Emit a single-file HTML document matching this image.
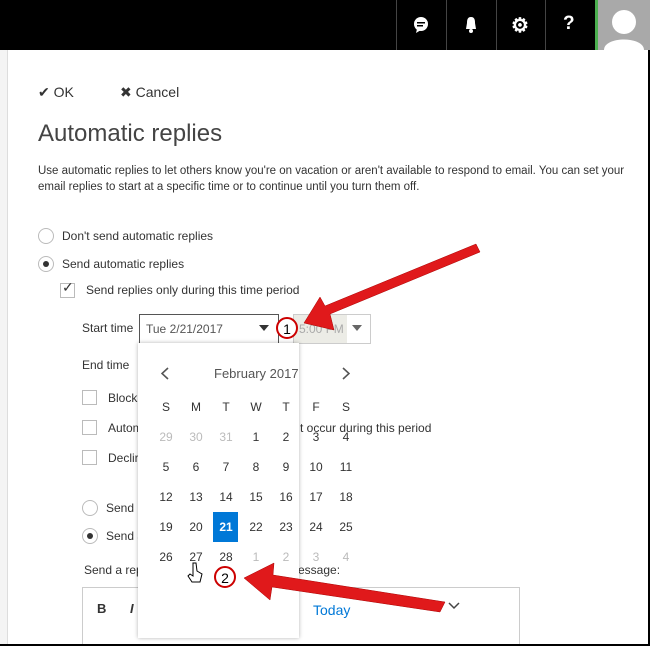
<!DOCTYPE html>
<html><head><style>
html,body{margin:0;width:650px;height:646px;overflow:hidden}
body{background:#fff;font-family:"Liberation Sans",sans-serif;position:relative;color:#333}
.a{position:absolute;white-space:nowrap}
.t{font-size:12px;color:#333}
.cb{position:absolute;width:13px;height:13px;border:1px solid #bbb;background:#fff}
.rd{position:absolute;width:14px;height:14px;border:1px solid #bbb;border-radius:50%;background:#fff}
.cal{position:absolute;left:138px;top:343px;width:161px;height:295px;background:#fff;box-shadow:0 0 4px rgba(0,0,0,.3)}
.g{position:absolute;font-size:12px;width:24px;text-align:center}
</style></head><body>
<div class="a" style="left:0;top:0;width:650px;height:50px;background:#000"></div>
<div class="a" style="left:396px;top:0;width:1px;height:50px;background:#444"></div>
<div class="a" style="left:446px;top:0;width:1px;height:50px;background:#444"></div>
<div class="a" style="left:496px;top:0;width:1px;height:50px;background:#444"></div>
<div class="a" style="left:545px;top:0;width:1px;height:50px;background:#444"></div>
<svg class="a" style="left:412px;top:16px" width="18" height="18"><circle cx="9" cy="8" r="7" fill="#fff"/><path d="M5 13 L4 17 L9 14Z" fill="#fff"/><rect x="5" y="6" width="8" height="1.5" fill="#000"/><rect x="5" y="9" width="6" height="1.5" fill="#000"/></svg>
<svg class="a" style="left:462px;top:15px" width="18" height="20"><path d="M9 2 C5 2 5 6 5 8 L4 14 H14 L13 8 C13 6 13 2 9 2Z" fill="#fff"/><circle cx="9" cy="16" r="2" fill="#fff"/></svg>
<div class="a" style="left:511px;top:13px;color:#fff;font-size:20px;font-weight:bold">⚙</div>
<div class="a" style="left:563px;top:13px;color:#fff;font-size:19px;font-weight:bold">?</div>
<div class="a" style="left:595px;top:0;width:3px;height:50px;background:#4caf50"></div>
<div class="a" style="left:598px;top:0;width:52px;height:50px;background:#a9a9a9"></div>
<svg class="a" style="left:598px;top:0" width="52" height="50"><circle cx="26" cy="22" r="12" fill="#fff"/><path d="M6 50 C6 36 46 36 46 50Z" fill="#fff"/></svg>
<div class="a" style="left:0;top:50px;width:7px;height:596px;background:#f4f4f4;border-right:1px solid #ddd"></div>
<div class="a" style="left:38px;top:84px;font-size:14px;color:#333">✔ OK</div>
<div class="a" style="left:120px;top:84px;font-size:14px;color:#333">✖ Cancel</div>
<div class="a" style="left:38px;top:120px;font-size:24px;font-weight:300;color:#444">Automatic replies</div>
<div class="a t" style="left:38px;top:165px;font-size:11.5px">Use automatic replies to let others know you're on vacation or aren't available to respond to email. You can set your</div>
<div class="a t" style="left:38px;top:181px;font-size:11.5px">email replies to start at a specific time or to continue until you turn them off.</div>
<div class="rd" style="left:38px;top:228px"></div><div class="a t" style="left:62px;top:229px">Don't send automatic replies</div>
<div class="rd" style="left:38px;top:256px"></div><div class="a" style="left:43px;top:261px;width:6px;height:6px;border-radius:50%;background:#333"></div><div class="a t" style="left:62px;top:257px">Send automatic replies</div>
<div class="cb" style="left:60px;top:283px"></div><div class="a" style="left:62px;top:279px;font-size:14px;color:#333">✓</div><div class="a t" style="left:86px;top:283px">Send replies only during this time period</div>
<div class="a t" style="left:82px;top:321px">Start time</div>
<div class="a" style="left:139px;top:314px;width:138px;height:28px;border:1px solid #555;background:#fff"></div>
<div class="a t" style="left:146px;top:322px;color:#555">Tue 2/21/2017</div>
<svg class="a" style="left:259px;top:325px" width="10" height="6"><path d="M0 0H10L5 6Z" fill="#333"/></svg>
<div class="a" style="left:293px;top:314px;width:76px;height:28px;border:1px solid #ccc;background:#fff"></div>
<div class="a" style="left:294px;top:315px;width:53px;height:28px;background:#ecece6"></div>
<div class="a t" style="left:299px;top:322px;color:#aaa">5:00 PM</div>
<svg class="a" style="left:352px;top:325px" width="10" height="6"><path d="M0 0H10L5 6Z" fill="#666"/></svg>
<div class="a t" style="left:82px;top:358px">End time</div>
<div class="cb" style="left:82px;top:390px"></div><div class="a t" style="left:108px;top:391px">Block</div>
<div class="cb" style="left:82px;top:420px"></div><div class="a t" style="left:108px;top:421px">Autom</div>
<div class="a t" style="left:300px;top:421px">t occur during this period</div>
<div class="cb" style="left:82px;top:450px"></div><div class="a t" style="left:108px;top:451px">Declir</div>
<div class="rd" style="left:82px;top:500px"></div><div class="a t" style="left:106px;top:501px">Send r</div>
<div class="rd" style="left:82px;top:528px"></div><div class="a" style="left:87px;top:533px;width:6px;height:6px;border-radius:50%;background:#333"></div><div class="a t" style="left:106px;top:529px">Send a</div>
<div class="a t" style="left:84px;top:563px">Send a rep</div>
<div class="a t" style="left:298px;top:563px">essage:</div>
<div class="a" style="left:82px;top:587px;width:436px;height:60px;border:1px solid #ccc"></div>
<div class="a" style="left:97px;top:601px;font-weight:bold;font-size:13px">B</div>
<div class="a" style="left:130px;top:601px;font-weight:bold;font-style:italic;font-size:13px">I</div>
<svg class="a" style="left:448px;top:602px" width="12" height="8"><path d="M1 1L6 6L11 1" stroke="#444" stroke-width="1.5" fill="none"/></svg>
<div class="cal">
<svg class="a" style="left:23px;top:24px" width="8" height="13"><path d="M7 1L1 6.5L7 12" stroke="#555" stroke-width="1.6" fill="none"/></svg>
<div class="a" style="left:76px;top:23px;font-size:13px;color:#555">February 2017</div>
<svg class="a" style="left:204px;top:24px" width="8" height="13"><path d="M1 1L7 6.5L1 12" stroke="#555" stroke-width="1.6" fill="none"/></svg>
</div>
<div id="grid"></div>
<div class="a" style="left:313px;top:602px;font-size:14px;color:#0078d7">Today</div>
<div class="a" style="left:0;top:644px;width:650px;height:2px;background:#000"></div>
<div class="a" style="left:648px;top:50px;width:2px;height:596px;background:#000"></div>
<script>
var r=[["S","M","T","W","T","F","S"],["29","30","31","1","2","3","4"],["5","6","7","8","9","10","11"],["12","13","14","15","16","17","18"],["19","20","21","22","23","24","25"],["26","27","28","1","2","3","4"]];
var h="";for(var i=0;i<6;i++)for(var j=0;j<7;j++){var x=154+j*30,y=402+i*30;var s="left:"+x+"px;top:"+(y-2)+"px;";var c="#333";
if((i==1&&j<3)||(i==5&&j>2))c="#bbb";
if(i==4&&j==2){h+='<div class="a" style="left:'+(x-1)+'px;top:'+(y-10)+'px;width:25px;height:30px;background:#0078d7"></div>';c="#fff;font-weight:bold";}
h+='<div class="g" style="'+s+'color:'+c+'">'+r[i][j]+'</div>';}
document.getElementById("grid").innerHTML=h;
</script>
<svg class="a" style="left:0;top:0" width="650" height="646">
<g fill="#e0191b" stroke="#a00" stroke-width="0.5">
<path d="M476 244 L480 252 L330 314 L334 330 L304 323 L320 297 L325 306Z"/>
<path d="M445 602 L440 612 L272 587 L270 600 L244 578 L274 563 L273 575Z"/>
</g>
<circle cx="287" cy="328" r="10" fill="#fff" stroke="#c00" stroke-width="2"/>
<text x="287" y="334" font-size="14" text-anchor="middle" font-family="Liberation Sans">1</text>
<circle cx="225" cy="577" r="10" fill="#fff" stroke="#c00" stroke-width="2"/>
<text x="225" y="583" font-size="14" text-anchor="middle" font-family="Liberation Sans">2</text>
<path d="M193 563 L193 576 L190 574 L188 576 L192 582 L200 582 L202 574 L197 571 L196 563Z" fill="#fff" stroke="#000" stroke-width="1"/>
</svg>
</body></html>
